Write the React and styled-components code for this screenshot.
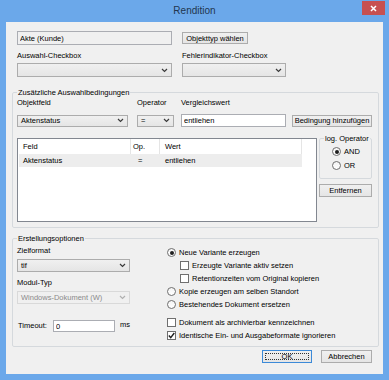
import React from 'react';
import styled, { createGlobalStyle } from 'styled-components';

const Global = createGlobalStyle`
  html, body { margin: 0; padding: 0; background: #6ba8ea; }
  body { font-family: "Liberation Sans", Arial, sans-serif; font-size: 7.5px; color: #000; }
  * { box-sizing: border-box; }
`;

const Window = styled.div`
  width: 389px;
  height: 380px;
  background: #6ba8ea;
  display: flex;
  flex-direction: column;
`;

const TitleBar = styled.div`
  height: 22px;
  flex: none;
  display: grid;
  grid-template-columns: 1fr auto 1fr;
  align-items: start;
`;

const Title = styled.div`
  grid-column: 2;
  font-size: 10px;
  line-height: 22px;
  color: #22364e;
`;

const CloseButton = styled.div`
  grid-column: 3;
  justify-self: end;
  margin: 1px 4px 0 0;
  width: 23px;
  height: 14px;
  background: #c75050;
  display: flex;
  align-items: center;
  justify-content: center;
`;

const Client = styled.div`
  flex: 1;
  margin: 0 6px 6px 6px;
  background: #f0f0f0;
  padding: 9px 4px 11px 6px;
  display: flex;
  flex-direction: column;
`;

const TopSection = styled.div`
  padding-left: 5px;
  display: flex;
  flex-direction: column;
`;

const Row = styled.div`
  display: flex;
  align-items: center;
  gap: ${p => p.$gap ?? 0}px;
  margin-top: ${p => p.$mt ?? 0}px;
  margin-left: ${p => p.$ml ?? 0}px;
  height: ${p => (p.$h ? `${p.$h}px` : 'auto')};
`;

const GridRow = styled.div`
  display: grid;
  grid-template-columns: ${p => p.$cols};
  column-gap: ${p => p.$gap ?? 0}px;
  align-items: ${p => p.$align ?? 'center'};
  margin-top: ${p => p.$mt ?? 0}px;
`;

const Label = styled.div`
  line-height: 10px;
  white-space: nowrap;
  margin-top: ${p => p.$mt ?? 0}px;
  margin-left: ${p => p.$ml ?? 0}px;
  width: ${p => (p.$w ? `${p.$w}px` : 'auto')};
`;

const TextField = styled.input`
  width: ${p => p.$w}px;
  height: ${p => p.$h ?? 13}px;
  border: 1px solid #abadb3;
  background: ${p => (p.$grey ? '#f0f0f0' : '#fff')};
  font-family: inherit;
  font-size: 7.5px;
  padding: 0 2px;
  margin: 0;
  color: #000;
  outline: none;
`;

const Button = styled.button`
  width: ${p => p.$w}px;
  height: ${p => p.$h ?? 13}px;
  margin: ${p => p.$mt ?? 0}px 0 0 0;
  padding: 0;
  font-family: inherit;
  font-size: 7.5px;
  color: #000;
  background: linear-gradient(#f0f0f0, #e5e5e5);
  border: 1px solid ${p => (p.$default ? '#3c8ad8' : '#acacac')};
  outline: ${p => (p.$default ? '1px dotted #333' : 'none')};
  outline-offset: -4px;
  white-space: nowrap;
`;

const ComboBox = styled.div`
  width: ${p => p.$w}px;
  height: ${p => p.$h ?? 13}px;
  border: 1px solid ${p => (p.$disabled ? '#d9d9d9' : '#acacac')};
  background: ${p => (p.$disabled ? '#f0f0f0' : 'linear-gradient(#f0f0f0, #e5e5e5)')};
  color: ${p => (p.$disabled ? '#8a8a8a' : '#000')};
  display: flex;
  align-items: center;
  justify-content: space-between;
  padding: 0 3px 0 3px;
  white-space: nowrap;
`;

const Chevron = ({ color }) => (
  <svg width="7" height="5" viewBox="0 0 7 5">
    <polyline points="1,1 3.5,3.5 6,1" fill="none" stroke={color} strokeWidth="1.2" />
  </svg>
);

const Combo = ({ w, h, disabled, children }) => (
  <ComboBox $w={w} $h={h} $disabled={disabled}>
    <span>{children}</span>
    <Chevron color={disabled ? '#b0b0b0' : '#3a3a3a'} />
  </ComboBox>
);

const Group = styled.fieldset`
  margin: ${p => p.$mt ?? 0}px 0 0 0;
  padding: ${p => p.$pad};
  border: 1px solid #d5d9dd;
  border-radius: 2px;
  min-inline-size: 0;
`;

const Legend = styled.legend`
  padding: 0 1px;
  line-height: 9px;
  font-size: 7.5px;
  white-space: nowrap;
`;

const ListBox = styled.div`
  margin-top: 4px;
  height: 84px;
  border: 1px solid #828790;
  background: #fff;
  display: flex;
  flex-direction: column;
`;

const ListHeader = styled.div`
  display: grid;
  grid-template-columns: 113px 29px 142px;
  height: 15px;
  align-items: stretch;
`;

const HeaderCell = styled.div`
  border-right: 1px solid #e5e5e5;
  padding-left: ${p => p.$pl}px;
  display: flex;
  align-items: center;
`;

const ListRow = styled.div`
  display: grid;
  grid-template-columns: 112px 29px 142px;
  height: 13px;
  align-items: center;
  background: #ededed;
  width: 283px;
  margin-left: 1px;
`;

const Cell = styled.div`
  padding-left: ${p => p.$pl}px;
  white-space: nowrap;
`;

const SideColumn = styled.div`
  display: flex;
  flex-direction: column;
  align-items: stretch;
`;

const OptionRow = styled.label`
  display: flex;
  align-items: center;
  height: 13px;
  padding-left: ${p => p.$indent ?? 0}px;
  gap: 3px;
  white-space: nowrap;
`;

const RadioCircle = styled.span`
  width: 9px;
  height: 9px;
  border-radius: 50%;
  border: 1px solid #6f6f6f;
  background: linear-gradient(#f4f4f4, #ffffff);
  display: flex;
  align-items: center;
  justify-content: center;
  flex: none;
  &::after {
    content: '';
    width: 4px;
    height: 4px;
    border-radius: 50%;
    background: ${p => (p.$checked ? '#1f1f1f' : 'transparent')};
  }
`;

const CheckBox = styled.span`
  width: 9px;
  height: 9px;
  border: 1px solid #6f6f6f;
  background: #fff;
  display: flex;
  align-items: center;
  justify-content: center;
  flex: none;
`;

const Radio = ({ checked, children, indent }) => (
  <OptionRow $indent={indent}>
    <RadioCircle $checked={checked} />
    <span>{children}</span>
  </OptionRow>
);

const Check = ({ checked, children, indent }) => (
  <OptionRow $indent={indent}>
    <CheckBox>
      {checked && (
        <svg width="7" height="7" viewBox="0 0 7 7">
          <polyline points="0.8,3.6 2.7,5.6 6.3,1" fill="none" stroke="#1f1f1f" strokeWidth="1.4" />
        </svg>
      )}
    </CheckBox>
    <span>{children}</span>
  </OptionRow>
);

const RadioGroupBody = styled.div`
  display: flex;
  flex-direction: column;
  gap: 1px;
  padding-left: 8px;
`;

const Column = styled.div`
  display: flex;
  flex-direction: column;
`;

const Spacer = styled.div`
  height: ${p => p.$h}px;
`;

const Footer = styled.div`
  display: flex;
  justify-content: flex-end;
  gap: 9px;
  margin-top: 3px;
  padding-right: 7px;
`;

export default function App() {
  return (
    <>
      <Global />
      <Window>
        <TitleBar>
          <Title>Rendition</Title>
          <CloseButton>
            <svg width="7" height="7" viewBox="0 0 7 7">
              <path d="M1 1 L6 6 M6 1 L1 6" stroke="#fff" strokeWidth="1.5" />
            </svg>
          </CloseButton>
        </TitleBar>
        <Client>
          <TopSection>
            <Row $gap={10} $h={14}>
              <TextField $w={155} $h={14} readOnly $grey defaultValue="Akte (Kunde)" />
              <Button $w={66} $h={12}>Objekttyp wählen</Button>
            </Row>
            <GridRow $cols="155px 1fr" $gap={10} $mt={6}>
              <Label>Auswahl-Checkbox</Label>
              <Label>Fehlerindikator-Checkbox</Label>
            </GridRow>
            <GridRow $cols="155px 104px" $gap={10} $mt={2}>
              <Combo w={155} h={14} />
              <Combo w={104} h={14} />
            </GridRow>
          </TopSection>

          <Group $mt={11} $pad="1px 6px 5px 4px">
            <Legend>Zusätzliche Auswahlbedingungen</Legend>
            <GridRow $cols="120px 44px 1fr">
              <Label>Objektfeld</Label>
              <Label>Operator</Label>
              <Label>Vergleichswert</Label>
            </GridRow>
            <Row $mt={6} $h={13}>
              <Combo w={111} h={12}>Aktenstatus</Combo>
              <Row $ml={9}>
                <Combo w={37} h={12}>=</Combo>
              </Row>
              <Row $ml={7}>
                <TextField $w={105} $h={13} readOnly defaultValue="entliehen" />
              </Row>
              <Row $ml={6}>
                <Button $w={80} $h={12}>Bedingung hinzufügen</Button>
              </Row>
            </Row>
            <GridRow $cols="300px 53px" $gap={2} $mt={7} $align="start">
              <ListBox>
                <ListHeader>
                  <HeaderCell $pl={5}>Feld</HeaderCell>
                  <HeaderCell $pl={2}>Op.</HeaderCell>
                  <HeaderCell $pl={5}>Wert</HeaderCell>
                </ListHeader>
                <ListRow>
                  <Cell $pl={4}>Aktenstatus</Cell>
                  <Cell $pl={7}>=</Cell>
                  <Cell $pl={5}>entliehen</Cell>
                </ListRow>
              </ListBox>
              <SideColumn>
                <Group $pad="2px 2px 6px 4px">
                  <Legend>log. Operator</Legend>
                  <RadioGroupBody>
                    <Radio checked>AND</Radio>
                    <Radio>OR</Radio>
                  </RadioGroupBody>
                </Group>
                <Button $w={53} $h={13} $mt={5}>Entfernen</Button>
              </SideColumn>
            </GridRow>
          </Group>

          <Group $mt={6} $pad="3px 6px 4px 4px">
            <Legend>Erstellungsoptionen</Legend>
            <GridRow $cols="150px 1fr" $align="start">
              <Column>
                <Label>Zielformat</Label>
                <Row $mt={3}>
                  <Combo w={113} h={13}>tif</Combo>
                </Row>
                <Label $mt={6}>Modul-Typ</Label>
                <Row $mt={3}>
                  <Combo w={113} h={13} disabled>Windows-Dokument (W)</Combo>
                </Row>
                <Row $mt={16} $h={12}>
                  <Label $w={36} style={{ paddingLeft: 1 }}>Timeout:</Label>
                  <TextField $w={62} $h={12} readOnly defaultValue="0" />
                  <Label $ml={5} $mt={-3}>ms</Label>
                </Row>
              </Column>
              <Column>
                <Radio checked>Neue Variante erzeugen</Radio>
                <Check indent={13}>Erzeugte Variante aktiv setzen</Check>
                <Check indent={13}>Retentionzeiten vom Original kopieren</Check>
                <Radio>Kopie erzeugen am selben Standort</Radio>
                <Radio>Bestehendes Dokument ersetzen</Radio>
                <Spacer $h={5} />
                <Check>Dokument als archivierbar kennzeichnen</Check>
                <Check checked>Identische Ein- und Ausgabeformate ignorieren</Check>
              </Column>
            </GridRow>
          </Group>

          <Footer>
            <Button $w={50} $h={13} $default>OK</Button>
            <Button $w={51} $h={13}>Abbrechen</Button>
          </Footer>
        </Client>
      </Window>
    </>
  );
}
